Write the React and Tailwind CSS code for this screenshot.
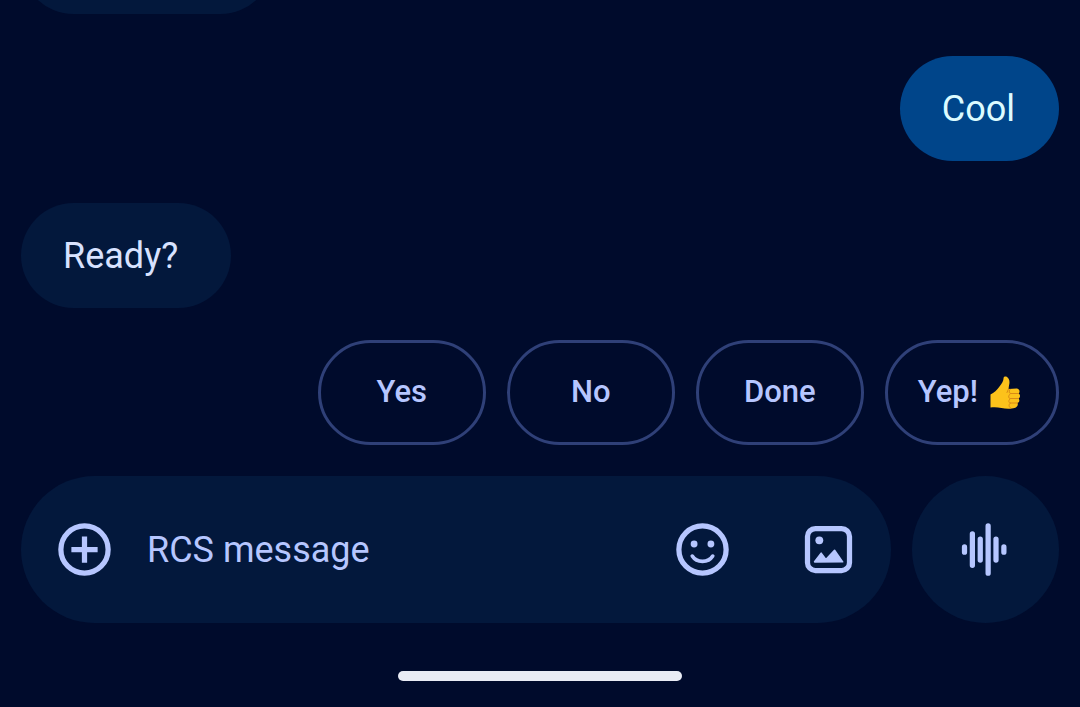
import { clsx } from 'clsx'

const messages = [
    { id: 1, text: '', mine: false },
    { id: 2, text: 'Cool', mine: true },
    { id: 3, text: 'Ready?', mine: false },
]

const replies = [
    { label: 'Yes' },
    { label: 'No' },
    { label: 'Done' },
    { label: 'Yep!', thumb: true },
]

const Icon = ({ children }) => (
    <svg viewBox="0 0 24 24" className="size-[63px]" fill="none" stroke="currentColor" strokeWidth="2" aria-hidden="true">
        {children}
    </svg>
)

const AddIcon = () => (
    <Icon>
        <circle cx="12" cy="12" r="9" />
        <path d="M12 7v10M7 12h10" />
    </Icon>
)

const EmojiIcon = () => (
    <Icon>
        <circle cx="12" cy="12" r="9" />
        <circle cx="8.8" cy="9.9" r="1.3" fill="currentColor" stroke="none" />
        <circle cx="15.200" cy="9.9" r="1.3" fill="currentColor" stroke="none" />
        <path d="M8.1 14.500c1.7 2.700 6.1 2.700 7.8 0" strokeWidth="1.4" strokeLinecap="round" />
    </Icon>
)

const ImageIcon = () => (
    <Icon>
        <rect x="4" y="4" width="16" height="16" rx="3" />
        <circle cx="8.5" cy="8.5" r="1.5" fill="currentColor" stroke="none" />
        <path d="M6.7 16.700 9.2 13.400l1.8 2.400 3.300-3.500 3.100 4.400z" fill="currentColor" strokeWidth="0.6" strokeLinejoin="round" />
    </Icon>
)

const VoiceIcon = () => (
    <Icon>
        <path d="M4 11v2M7 6v12M10 8v8M13 3v18M16 8v8M19 11v2" strokeLinecap="round" />
    </Icon>
)

const ThumbsUp = () => (
    <svg viewBox="0 0 30 34" className="h-[34px] w-[30px]" role="img" aria-label="Thumbs up">
        <path
            d="M0.5 18.5C4 17 7 14 9.5 10.5 12 7 13.5 5 13.5 2.5 13.5 0.5 15.5 0 17 1c2.5 1.5 3 5 2 8.5L18.5 13l8-0.5c3 0 4 3.5 2 5 2 1 2 4 0 5 1.5 1.5 1 4-1 4.5 1 2-0.5 4.5-3 5-3 1-9 1-13 0-4-1-8-1-11-0.5z"
            fill="#fcc21b"
        />
        <path
            d="M18.5 13l-1.5 3.5M28.5 17.5h-7.5c-2 0-2.5-2-1-4M28.5 22.5h-8c-2.5 0-2.5-3 0-5M27.5 27h-7c-2.5 0-2-3.5 0-4.5M20.5 27c-2 1-2 4 0 5"
            fill="none"
            stroke="#d98a16"
            strokeLinecap="round"
        />
    </svg>
)

const Bubble = ({ text, mine }) => (
    <li
        className={clsx(
            'flex h-[105px] shrink-0 items-center rounded-full pl-[42px] text-4xl',
            mine ? 'self-end bg-[#00458a] pr-11 text-[#dcfbff]' : 'self-start bg-[#03183c] pr-[53px] text-[#d8e2ff]',
            !text && 'w-[252px]',
        )}
    >
        {text}
    </li>
)

export default function App() {
    return (
        <main className="flex h-screen flex-col justify-end overflow-hidden bg-[#000b2c] px-[21px] font-['Roboto',sans-serif] text-[#b6c6ff]">
            <ul className="flex shrink-0 flex-col gap-[42px]">
                {messages.map(m => <Bubble key={m.id} text={m.text} mine={m.mine} />)}
            </ul>

            {/* Suggested replies */}
            <div className="mt-8 flex shrink-0 justify-end gap-[21px]">
                {replies.map(r => (
                    <button
                        key={r.label}
                        type="button"
                        className={clsx(
                            'flex h-[105px] min-w-[168px] items-center justify-center gap-3 rounded-full border-3 border-[#2f4078] pl-[30px] text-[31px] font-medium',
                            r.thumb ? 'pr-9' : 'pr-[30px]',
                        )}
                    >
                        {r.label}
                        {r.thumb && <ThumbsUp />}
                    </button>
                ))}
            </div>

            {/* Composer */}
            <form className="mt-[31px] flex shrink-0 gap-[21px]" onSubmit={e => e.preventDefault()}>
                <div className="flex h-[147px] min-w-0 flex-1 items-center rounded-full bg-[#03183c] pr-[31px] pl-8">
                    <button type="button" aria-label="Add attachment"><AddIcon /></button>
                    <input
                        type="text"
                        aria-label="RCS message"
                        placeholder="RCS message"
                        className="ml-[31px] min-w-0 flex-1 bg-transparent text-4xl outline-none placeholder:text-[#b6c6ff]"
                    />
                    <button type="button" aria-label="Insert emoji"><EmojiIcon /></button>
                    <button type="button" aria-label="Insert image" className="ml-[63px]"><ImageIcon /></button>
                </div>
                <button type="button" aria-label="Record voice message" className="flex size-[147px] items-center justify-center rounded-full bg-[#03183c]">
                    <VoiceIcon />
                </button>
            </form>

            <div className="mt-12 mb-[26px] h-2.5 w-[284px] shrink-0 self-center rounded-full bg-[#e9ecf5]" />
        </main>
    )
}
